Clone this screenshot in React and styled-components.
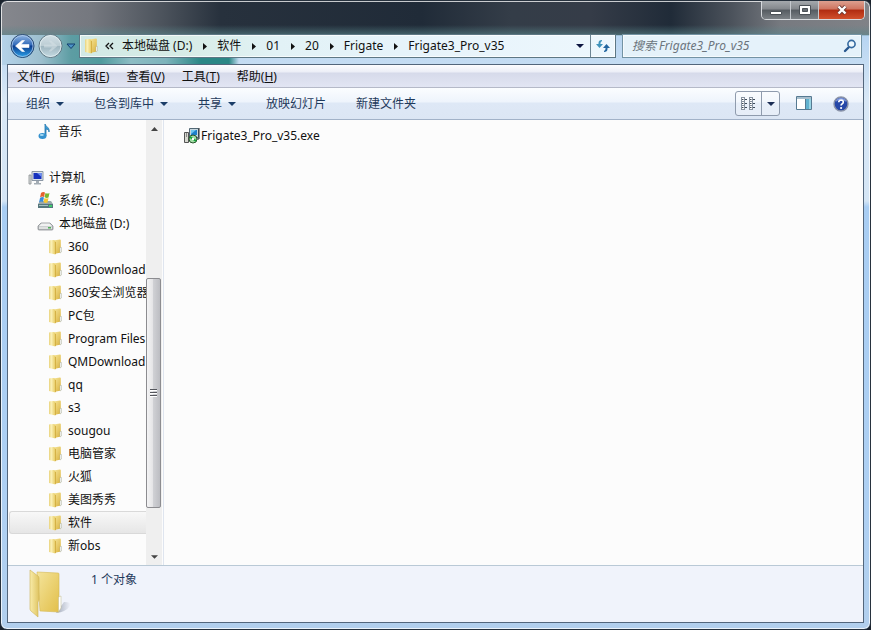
import React, { Component } from 'react';
import styled, { createGlobalStyle } from 'styled-components';

const GlobalStyle = createGlobalStyle`
  * {
    box-sizing: border-box;
  }
  body {
    margin: 0;
    background: #1a222c;
  }
  body, button, input {
    font-family: 'Noto Sans', 'Noto Sans CJK SC', sans-serif;
    font-size: 12px;
    line-height: 18px;
  }
  button {
    border: 0;
    padding: 0;
    background: none;
    color: inherit;
  }
  svg {
    display: block;
    flex: none;
  }
`

const Frame = styled.div`
  position: relative;
  display: flex;
  flex-direction: column;
  height: 100vh;
  min-height: 400px;
  padding: 33px 6px 6px;
  border: 1px solid #27323e;
  border-radius: 7px;
  box-shadow: inset 0 0 0 1px rgba(255,255,255,0.75);
  background:
    linear-gradient(90deg, #b5d3ea 0, #9dbfce 40px, #5d9da3 70px, #4f9a9d 100px, #8cbcc4 130px, #7db3bb 165px, #2b8786 200px, #2b8786 228px, rgba(180,213,242,0) 238px) 0 34px / 100% 30px no-repeat,
    linear-gradient(180deg, rgba(70,110,115,0) 24px, rgba(90,135,140,0.6) 34px, rgba(0,0,0,0) 35px) no-repeat,
    linear-gradient(90deg, #85878d 0, #75787f 90px, #4d545d 160px, #27313d 220px, #202b38 420px, #343d48 510px, #353c48 590px, #202b38 670px, #4b525b 730px, #777a80 780px, #808287 100%) 0 0 / 100% 34px no-repeat,
    linear-gradient(180deg, #b6d4f1 34px, #d9e8f6 100px, #d4e5f5 200px, #a8cdf3 206px, #aed0f3 80%, #b2cfed 100%);
`

const Caption = styled.div`
  position: absolute;
  top: 0;
  right: 5px;
  display: flex;
  height: 19px;
  border: 1px solid #d6d9dd;
  border-top: 0;
  border-radius: 0 0 5px 5px;
  overflow: hidden;
`

const CaptionButton = styled.button`
  display: flex;
  align-items: center;
  justify-content: center;
  width: ${props => props.$close ? '46px' : '28px'};
  border-left: ${props => props.$first ? '0' : '1px solid #c5c9ce'};
  background: ${props => props.$close
    ? 'linear-gradient(180deg, #dda08f 0, #cf7460 45%, #b02b10 50%, #d1502c 100%)'
    : 'linear-gradient(180deg, #a5a9ad 0, #83878c 45%, #555b61 50%, #7c8186 100%)'};
`

const NavRow = styled.div`
  display: flex;
  align-items: center;
  height: 30px;
  padding: 0 2px 6px 3px;
`

const RoundButton = styled.button`
  margin-right: 3px;
`

const HistoryButton = styled.button`
  width: 10px;
  margin-right: 3px;
`

const Address = styled.div`
  display: flex;
  align-items: center;
  flex: 1;
  min-width: 0;
  height: 24px;
  margin-right: 6px;
  padding-left: 4px;
  border: 1px solid #5d7784;
  background: linear-gradient(90deg, #d2e9e6 0, #d6ece6 100px, #e2f2f6 200px, #e6f3fa 60%, #edf7fd 100%);
  box-shadow: inset 0 0 0 1px rgba(255,255,255,0.7);
`

const Crumbs = styled.nav`
  display: flex;
  align-items: center;
  flex: 1;
  min-width: 0;
  overflow: hidden;
`

const Crumb = styled.button`
  display: flex;
  align-items: center;
  white-space: nowrap;
  color: #111;
`

const AddressButton = styled.button`
  display: flex;
  align-items: center;
  justify-content: center;
  width: ${props => props.$wide ? '25px' : '20px'};
  height: 22px;
  border-left: ${props => props.$wide ? '1px solid #6d8594' : '0'};
`

const Search = styled.label`
  display: flex;
  align-items: center;
  width: 240px;
  min-width: 140px;
  height: 24px;
  padding: 0 4px 0 9px;
  border: 1px solid #7393a4;
  background: #e5f2fa;
  box-shadow: inset 0 0 0 1px rgba(255,255,255,0.6);
  input {
    flex: 1;
    min-width: 0;
    padding: 0;
    border: 0;
    outline: 0;
    background: none;
    font-style: italic;
  }
  input::placeholder {
    color: #6b757d;
    opacity: 1;
  }
`

const Client = styled.div`
  display: flex;
  flex-direction: column;
  flex: 1;
  min-height: 0;
  border: 1px solid #53667c;
  background: #fcfcfc;
`

const MenuBar = styled.div`
  display: flex;
  flex: none;
  gap: 1px;
  height: 23px;
  padding: 0 1px;
  border-bottom: 1px solid #b5b9c8;
  background: linear-gradient(180deg, #fdfdff 0, #eceef7 7px, #d6daea 8px, #e2e5f3 100%);
`

const MenuItem = styled.button`
  padding: 1px 8px 0;
  color: #111;
  white-space: nowrap;
`

const Toolbar = styled.div`
  display: flex;
  align-items: center;
  flex: none;
  height: 32px;
  padding: 0 14px 0 3px;
  border-bottom: 1px solid #a2b2c8;
  background: linear-gradient(180deg, #fbfdff 0, #eef4fc 14px, #dee8f6 15px, #dce6f4 100%);
  color: #1e395b;
`

const ToolButton = styled.button`
  display: flex;
  align-items: center;
  gap: 6px;
  padding: 0 15px;
  white-space: nowrap;
`

const ToolRight = styled.div`
  display: flex;
  align-items: center;
  margin-left: auto;
  gap: 16px;
`

const ViewSplit = styled.div`
  display: flex;
  height: 25px;
  border: 1px solid #8f9bad;
  border-radius: 3px;
  background: rgba(255,255,255,0.3);
`

const SplitButton = styled.button`
  display: flex;
  align-items: center;
  justify-content: center;
  width: ${props => props.$narrow ? '18px' : '25px'};
  border-left: ${props => props.$narrow ? '1px solid #8f9bad' : '0'};
`

const Body = styled.div`
  display: flex;
  flex: 1;
  min-height: 0;
`

const Tree = styled.nav`
  flex: none;
  width: 138px;
  overflow: hidden;
`

const TreeRow = styled.button`
  display: flex;
  align-items: center;
  gap: 5px;
  width: calc(100% - 1px);
  height: 23px;
  margin-left: 1px;
  margin-top: ${props => props.$spaced ? '23px' : '0'};
  padding-left: ${props => [18, 27, 38][props.$level]}px;
  border: 1px solid ${props => props.$selected ? '#d9d9d9' : 'transparent'};
  border-right: 0;
  border-radius: 3px 0 0 3px;
  background: ${props => props.$selected ? 'linear-gradient(180deg, #f8f8f8, #e6e6e6)' : 'none'};
  color: #111;
  white-space: nowrap;
  overflow: hidden;
`

const ScrollBar = styled.div`
  display: flex;
  flex-direction: column;
  align-items: stretch;
  flex: none;
  width: 16px;
  background: #efefef;
`

const ScrollArrow = styled.button`
  display: flex;
  align-items: center;
  justify-content: center;
  height: 17px;
`

const ScrollTrack = styled.div`
  display: flex;
  flex-direction: column;
  flex: 1;
  &::before {
    content: '';
    flex: 142;
  }
  &::after {
    content: '';
    flex: 40;
  }
`

const ScrollThumb = styled.div`
  display: flex;
  align-items: center;
  justify-content: center;
  flex: 229;
  width: 15px;
  border: 1px solid #8c8c90;
  border-radius: 2px;
  background: linear-gradient(90deg, #f4f4f5 0, #e4e4e6 45%, #cfd0d4 50%, #bcbdc2 100%);
`

const Files = styled.main`
  flex: 1;
  min-width: 0;
  margin-left: 1px;
  padding: 4px 20px;
  border-left: 1px solid #dfe5ef;
`

const FileItem = styled.button`
  display: flex;
  align-items: center;
  gap: 1px;
  height: 23px;
  color: #111;
`

const Details = styled.footer`
  display: flex;
  align-items: flex-start;
  flex: none;
  height: 57px;
  padding: 3px 20px;
  gap: 19px;
  border-top: 1px solid #b9c9d6;
  background: #f0f3fb;
  color: #1e395b;
  p {
    margin: 2px 0 0;
  }
`

const Down = ({ color = '#1b3d68', width = 8 }) => (
  <svg width={width} height="4" viewBox="0 0 8 4"><path d="M0 0h8L4 4z" fill={color} /></svg>
)

const Right = () => (
  <svg width="25" height="9" viewBox="0 0 25 9"><path d="M11 1v7l4-3.500z" fill="#111" /></svg>
)

const FolderIcon = () => (
  <svg width="15" height="16" viewBox="0 0 15 16">
    <defs>
      <linearGradient id="smallFront">
        <stop stopColor="#e9d27c" />
        <stop offset=".35" stopColor="#fbf1b8" />
        <stop offset="1" stopColor="#e6c95f" />
      </linearGradient>
      <linearGradient id="smallBack" x2="1" y2="1">
        <stop stopColor="#f8e9a0" />
        <stop offset="1" stopColor="#d9b13c" />
      </linearGradient>
    </defs>
    <path d="M5 1.500 12 .5q.800 0 .8.800V13.500L6 15z" fill="url(#smallBack)" />
    <path d="M1 2q0-.8.800-.8L6 1l1.500 1.800V15.500L1 14z" fill="url(#smallFront)" />
    <path d="M7.500 3v12" stroke="#cfa93c" strokeWidth=".8" />
    <path d="M12 8.500h1.500v4.500L12 14z" fill="#fff" stroke="#a9ae9a" strokeWidth=".5" />
  </svg>
)

const MusicIcon = () => (
  <svg width="16" height="17" viewBox="0 0 16 17">
    <path d="M8 1c1 3 5 3.500 4 8 0-2-1.500-3-3-3v7H8z" fill="#3d9bd4" stroke="#2277ae" strokeWidth=".8" />
    <ellipse cx="5.500" cy="13" rx="4" ry="3" fill="#3592cf" />
    <ellipse cx="4.800" cy="12" rx="2" ry="1" fill="#a5daf3" />
  </svg>
)

const ComputerIcon = () => (
  <svg width="16" height="16" viewBox="0 0 16 16">
    <path d="M1 5h2v9H1z" fill="#d9dcdd" stroke="#888d91" strokeWidth=".8" />
    <path d="M4 1.500h11v9H4z" fill="#dae1e8" stroke="#8c98a6" />
    <path d="M5.500 3h8v6h-8z" fill="#1531bd" />
    <path d="M9 3h4.500v4z" fill="#6c8df1" />
    <path d="M8 11h3v2h2v1.500H6V13h2z" fill="#a4adb5" />
  </svg>
)

const SystemDiskIcon = () => (
  <svg width="17" height="17" viewBox="0 0 17 17">
    <path d="M3 9h11l2 3v4H1v-4z" fill="#9aa8ab" />
    <path d="M1 12h15v4H1z" fill="#56777d" />
    <path d="M2 13h9v1H2z" fill="#a4c0c1" />
    <path d="M12 13h3v2h-3z" fill="#3fce6c" />
    <path d="M4 1q2-1.500 4-.5L7 5q-2-1-4 .5z" fill="#e6602c" />
    <path d="M8.500 1q2 1 4 0l-1 4.500q-2 1-4-.5z" fill="#79b72e" />
    <path d="M3 6q2-1.500 4-.5L6 10q-2-1-4 .5z" fill="#398ddb" />
    <path d="M7.500 6q2 1 4 0l-1 4.500q-2 1-4-.5z" fill="#f7c732" />
  </svg>
)

const DiskIcon = () => (
  <svg width="17" height="16" viewBox="0 0 17 16">
    <path d="M1 10l3-3h9l3 3v3q0 1-1 1H2q-1 0-1-1z" fill="#b9bdbf" stroke="#7e8386" strokeWidth=".7" />
    <path d="M2 10l2.500-2.500h8L15 10z" fill="#f1f2f2" />
    <path d="M2 10.500h13v2.500H2z" fill="#dfe1e1" />
    <path d="M11 11h3v1.500h-3z" fill="#51b05a" />
  </svg>
)

const SetupIcon = () => (
  <svg width="16" height="17" viewBox="0 0 16 17">
    <path d="M5.500 1.500h9v9h-9z" fill="#c7d7df" stroke="#526774" />
    <path d="M7 3h6v5H7z" fill="#1e80cb" />
    <path d="M7 3h5L7 7z" fill="#6dc6f0" />
    <path d="M15 1v11h-3" fill="none" stroke="#20272b" />
    <path d="M.5 5.500h4v10h-4z" fill="#d7d8d0" stroke="#555" />
    <path d="M2.500 6v4" stroke="#888" />
    <circle cx="9" cy="12" r="4" fill="#a3dca5" stroke="#27542c" />
    <path d="M9 12l-3-2M9 12l3 2" stroke="#15a33b" strokeWidth="2" />
    <circle cx="9" cy="12" r="1.200" fill="#fff" />
  </svg>
)

const LargeFolderIcon = () => (
  <svg width="44" height="50" viewBox="0 0 44 50">
    <defs>
      <linearGradient id="folderBack" x2="1" y2="1">
        <stop stopColor="#f4e49b" />
        <stop offset="1" stopColor="#e2bf4a" />
      </linearGradient>
      <linearGradient id="folderFront" x2="1" y2="0">
        <stop stopColor="#f9eca9" />
        <stop offset="1" stopColor="#dfc462" />
      </linearGradient>
      <linearGradient id="folderShade">
        <stop stopColor="#8d96a8" stopOpacity=".8" />
        <stop offset="1" stopColor="#8d96a8" stopOpacity="0" />
      </linearGradient>
    </defs>
    <path d="M28 44l8-11q8 0 6 4-4 6-14 7z" fill="url(#folderShade)" />
    <path d="M9 3l21 1q1 0 1 1v38l-19-1z" fill="url(#folderBack)" stroke="#d5b953" strokeWidth=".6" />
    <path d="M30.500 28l2.500-1v12l-2.500 4z" fill="#fff" stroke="#c0b887" strokeWidth=".5" />
    <path d="M2 1l8 6q1 1 1 2v22l-1 2v15L3 42q-1-1-1-2z" fill="url(#folderFront)" stroke="#cfb355" strokeWidth=".6" />
  </svg>
)

const BackIcon = () => (
  <svg width="25" height="26" viewBox="0 0 25 26">
    <defs>
      <linearGradient id="backFill" x2="0" y2="1">
        <stop stopColor="#94b8e5" />
        <stop offset=".45" stopColor="#326bb9" />
        <stop offset=".5" stopColor="#0b3c8e" />
        <stop offset="1" stopColor="#2ea5ec" />
      </linearGradient>
    </defs>
    <circle cx="12.500" cy="13" r="11.500" fill="url(#backFill)" stroke="#2a4a72" />
    <circle cx="12.500" cy="13" r="10.500" fill="none" stroke="#bcd6f2" strokeOpacity=".7" />
    <path d="M5.500 13l6.500-5.500h2.500l-3.500 4h8v3h-8l3.500 4H12z" fill="#fff" stroke="#fff" strokeWidth=".6" />
  </svg>
)

const ForwardIcon = () => (
  <svg width="25" height="26" viewBox="0 0 25 26">
    <defs>
      <linearGradient id="forwardFill" x2="0" y2="1">
        <stop stopColor="#d3e0e6" />
        <stop offset=".48" stopColor="#bccdd4" />
        <stop offset=".52" stopColor="#9fb6c0" />
        <stop offset="1" stopColor="#c6dbe3" />
      </linearGradient>
    </defs>
    <circle cx="12.500" cy="13" r="11.500" fill="url(#forwardFill)" stroke="#5d7480" />
    <circle cx="12.500" cy="13" r="10.500" fill="none" stroke="#e6f2f5" strokeOpacity=".8" />
    <path d="M19.500 13L13 7.500h-2.500l3.500 4H6v3h8l-3.500 4H13z" fill="#d3e0e4" opacity=".6" />
  </svg>
)

const crumbs = ['本地磁盘 (D:)', '软件', '01', '20', 'Frigate', 'Frigate3_Pro_v35']

const menus = [
  ['文件', 'F'],
  ['编辑', 'E'],
  ['查看', 'V'],
  ['工具', 'T'],
  ['帮助', 'H'],
]

const tools = [
  { label: '组织', arrow: true },
  { label: '包含到库中', arrow: true },
  { label: '共享', arrow: true },
  { label: '放映幻灯片' },
  { label: '新建文件夹' },
]

const tree = [
  { label: '音乐', level: 1, icon: MusicIcon },
  { label: '计算机', level: 0, icon: ComputerIcon, spaced: true },
  { label: '系统 (C:)', level: 1, icon: SystemDiskIcon },
  { label: '本地磁盘 (D:)', level: 1, icon: DiskIcon },
  ...['360', '360Download', '360安全浏览器', 'PC包', 'Program Files', 'QMDownload', 'qq', 's3',
    'sougou', '电脑管家', '火狐', '美图秀秀', '软件', '新obs'].map(label => ({ label, level: 2, icon: FolderIcon })),
]

class App extends Component {

  constructor(props) {
    super(props)
    this.state = {
      selected: '软件',
      query: '',
    }
  }

  renderNav() {
    return (
      <NavRow>
        <RoundButton aria-label="后退"><BackIcon /></RoundButton>
        <RoundButton aria-label="前进"><ForwardIcon /></RoundButton>
        <HistoryButton aria-label="历史">
          <svg width="10" height="7" viewBox="0 0 10 7">
            <path d="M1 1h8L5 5.500z" fill="#4a93c6" stroke="#153f70" />
          </svg>
        </HistoryButton>
        <Address>
          <FolderIcon />
          <Crumbs>
            <svg width="23" height="9" viewBox="0 0 23 9">
              <path d="M10 1L7 4l3 3M14 1l-3 3 3 3" fill="none" stroke="#111" strokeWidth="1.300" />
            </svg>
            {crumbs.map((name, i) => (
              <Crumb key={name}>{name}{i < crumbs.length - 1 && <Right />}</Crumb>
            ))}
          </Crumbs>
          <AddressButton aria-label="以前的位置"><Down color="#0c1540" /></AddressButton>
          <AddressButton $wide aria-label="刷新">
            <svg width="16" height="14" viewBox="0 0 16 14">
              <path d="M7 1Q3.500 1 3.500 4v1H1l3.500 4L8 5H5.500V4q0-1 1.500-2z" fill="#3f93bb" />
              <path d="M9 13q3.500 0 3.500-3V9H15l-3.500-4L8 9h2.500v1q0 1-1.500 2z" fill="#2366a0" />
            </svg>
          </AddressButton>
        </Address>
        <Search>
          <input
            aria-label="搜索"
            placeholder="搜索 Frigate3_Pro_v35"
            value={this.state.query}
            onChange={e => this.setState({ query: e.target.value })}
          />
          <svg width="14" height="14" viewBox="0 0 14 14">
            <path d="M6 8L2 12" stroke="#28588e" strokeWidth="2.400" strokeLinecap="round" />
            <circle cx="8.500" cy="5" r="3.600" fill="#eef8fd" stroke="#34699f" strokeWidth="1.600" />
          </svg>
        </Search>
      </NavRow>
    )
  }

  renderToolbar() {
    return (
      <Toolbar>
        {tools.map(tool => (
          <ToolButton key={tool.label}>{tool.label}{tool.arrow && <Down />}</ToolButton>
        ))}
        <ToolRight>
          <ViewSplit>
            <SplitButton aria-label="更改视图">
              <svg width="15" height="13" viewBox="0 0 15 13">
                {[0, 8].map(x => [0, 4, 8].map(y => (
                  <g key={x + '-' + y}>
                    <rect x={x + .5} y={y + .5} width="3" height="4" fill="#fff" stroke="#8792a0" />
                    <path d={`M${x + 1} ${y + 2.500}h1.500M${x + 4} ${y + 2.500}h2`} stroke="#3e4b59" />
                  </g>
                )))}
              </svg>
            </SplitButton>
            <SplitButton $narrow aria-label="更多选项"><Down color="#1b2d55" /></SplitButton>
          </ViewSplit>
          <button aria-label="显示预览窗格">
            <svg width="17" height="15" viewBox="0 0 17 15">
              <path d="M.5.500h15v13H.5z" fill="#fff" stroke="#567a92" />
              <path d="M1 1h14v2H1z" fill="#a8bfcd" />
              <path d="M10 3h5v10h-5z" fill="#61b2cf" />
              <path d="M13 3h2v10h-2z" fill="#98d4e4" />
              <path d="M9.500 3v10" stroke="#567a92" />
            </svg>
          </button>
          <button aria-label="获取帮助">
            <svg width="20" height="16" viewBox="0 0 20 16">
              <circle cx="12" cy="8" r="7" fill="#2648a8" stroke="#8a93a8" strokeWidth="1.400" />
              <path d="M6.500 6q5-5 11 0-1-4-5.500-4T6.500 6z" fill="#829be0" />
              <path d="M9.700 6.300q.2-2.300 2.400-2.300 2.300.1 2.200 2 0 1.300-1.300 2-.9.500-.9 1.500" fill="none" stroke="#fff" strokeWidth="1.700" />
              <circle cx="12.100" cy="12" r="1.100" fill="#fff" />
            </svg>
          </button>
        </ToolRight>
      </Toolbar>
    )
  }

  renderBody() {
    return (
      <Body>
        <Tree>
          {tree.map(({ label, level, icon: Icon, spaced }) => (
            <TreeRow
              key={label}
              $level={level}
              $spaced={spaced}
              $selected={this.state.selected === label}
              onClick={() => this.setState({ selected: label })}
            >
              <Icon />{label}
            </TreeRow>
          ))}
        </Tree>
        <ScrollBar>
          <ScrollArrow aria-label="向上滚动">
            <svg width="7" height="4" viewBox="0 0 7 4"><path d="M0 4h7L3.500 0z" fill="#444" /></svg>
          </ScrollArrow>
          <ScrollTrack>
            <ScrollThumb>
              <svg width="7" height="8" viewBox="0 0 7 8">
                <path d="M0 .5h7M0 3.500h7M0 6.500h7" stroke="#54565c" />
                <path d="M0 1.500h7M0 4.500h7M0 7.500h7" stroke="#fff" />
              </svg>
            </ScrollThumb>
          </ScrollTrack>
          <ScrollArrow aria-label="向下滚动"><Down color="#444" width={7} /></ScrollArrow>
        </ScrollBar>
        <Files>
          <FileItem><SetupIcon />Frigate3_Pro_v35.exe</FileItem>
        </Files>
      </Body>
    )
  }

  render() {
    return (
      <>
        <GlobalStyle />
        <Frame>
          <Caption>
            <CaptionButton $first aria-label="最小化">
              <svg width="12" height="12" viewBox="0 0 12 12">
                <path d="M.5 7.500h11v3H.5z" fill="#fff" stroke="#4b5157" />
              </svg>
            </CaptionButton>
            <CaptionButton aria-label="最大化">
              <svg width="12" height="10" viewBox="0 0 12 10">
                <path d="M.5.500h11v9H.5z" fill="#fff" stroke="#4b5157" />
                <path d="M3.500 3.500h5v3h-5z" fill="#666c72" stroke="#4b5157" />
              </svg>
            </CaptionButton>
            <CaptionButton $close aria-label="关闭">
              <svg width="12" height="10" viewBox="0 0 12 10">
                <path d="M2.500 1.500l7 7M9.500 1.500l-7 7" stroke="#6b3a35" strokeWidth="4" />
                <path d="M2.500 1.500l7 7M9.500 1.500l-7 7" stroke="#fff" strokeWidth="2.400" />
              </svg>
            </CaptionButton>
          </Caption>
          {this.renderNav()}
          <Client>
            <MenuBar>
              {menus.map(([name, letter]) => (
                <MenuItem key={letter}>{name}(<u>{letter}</u>)</MenuItem>
              ))}
            </MenuBar>
            {this.renderToolbar()}
            {this.renderBody()}
            <Details>
              <LargeFolderIcon />
              <p>1 个对象</p>
            </Details>
          </Client>
        </Frame>
      </>
    );
  }
}

export default App;
